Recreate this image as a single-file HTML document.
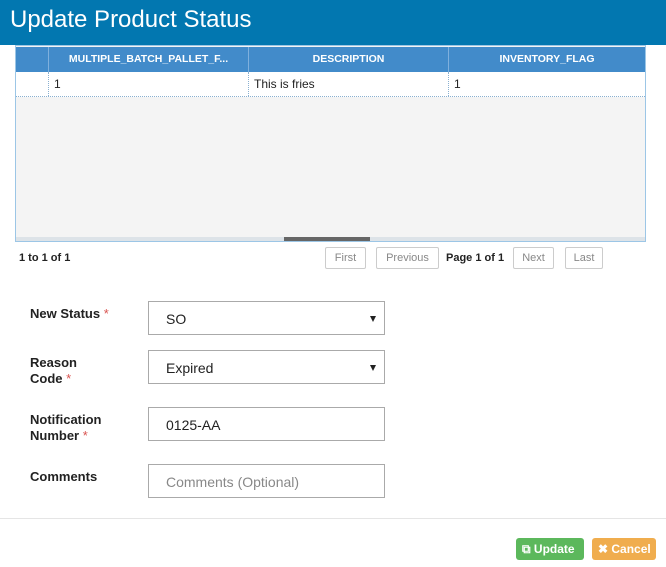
<!DOCTYPE html>
<html><head><style>
*{box-sizing:border-box;margin:0;padding:0}
body{width:666px;height:567px;background:#fff;font-family:"Liberation Sans",sans-serif;position:relative;overflow:hidden;color:#222}
.hd{position:absolute;left:0;top:0;width:666px;height:45px;background:#0277b0;color:#fff;font-size:24px;padding:6px 0 0 10px}
.grid{position:absolute;left:15px;top:45px;width:631px;height:197px;border:1px solid #9cc6e6;background:#f4f4f4}
.hr{position:absolute;left:0;top:1px;width:629px;height:25px;background:#428bca}
.c{position:absolute;height:25px;font-size:10.5px;font-weight:bold;color:#fff;text-align:center;line-height:25px;border-left:1px solid #7fb0dd}
.row{position:absolute;left:0;top:26px;width:629px;height:25px;background:#fff;border-bottom:1px dotted #8ab0d0}
.d{position:absolute;top:0;height:24px;font-size:12px;line-height:24px;padding-left:5px;border-left:1px dotted #8ab0d0}
.sb{position:absolute;left:0;bottom:0;width:629px;height:4px;background:#dde3e8}
.sb i{position:absolute;left:268px;top:0;width:86px;height:4px;background:#666}
.pg{position:absolute;top:247px;height:22px;border:1px solid #ccc;border-radius:2px;font-size:11px;color:#888;text-align:center;line-height:20px;background:#fff}
.t{position:absolute;font-size:11px;font-weight:bold}
.lb{position:absolute;left:30px;font-size:13px;font-weight:bold;line-height:16px}
.lb b{color:#d9534f;font-weight:normal}
.in{position:absolute;left:148px;width:237px;height:34px;border:1px solid #aaa;font-size:14px;padding:9px 0 0 17px}
.in.s::after{content:"";position:absolute;right:8px;top:14px;border-left:3.5px solid transparent;border-right:3.5px solid transparent;border-top:6px solid #222}
.btn{position:absolute;top:538px;height:22px;border-radius:3px;color:#fff;font-size:12px;font-weight:bold;line-height:22px;padding-left:6px}
</style></head><body>
<div class="hd">Update Product Status</div>
<div class="grid">
<div class="hr">
<div class="c" style="left:32px;width:200px">MULTIPLE_BATCH_PALLET_F...</div>
<div class="c" style="left:232px;width:200px">DESCRIPTION</div>
<div class="c" style="left:432px;width:197px">INVENTORY_FLAG</div>
</div>
<div class="row">
<div class="d" style="left:32px;width:200px">1</div>
<div class="d" style="left:232px;width:200px">This is fries</div>
<div class="d" style="left:432px;width:197px">1</div>
</div>
<div class="sb"><i></i></div>
</div>
<div class="t" style="left:19px;top:252px">1 to 1 of 1</div>
<div class="pg" style="left:325px;width:41px">First</div>
<div class="pg" style="left:376px;width:63px">Previous</div>
<div class="t" style="left:446px;top:252px">Page 1 of 1</div>
<div class="pg" style="left:513px;width:41px">Next</div>
<div class="pg" style="left:565px;width:38px">Last</div>
<div class="lb" style="top:306px">New Status <b>*</b></div>
<div class="in s" style="top:301px">SO</div>
<div class="lb" style="top:355px">Reason<br>Code <b>*</b></div>
<div class="in s" style="top:350px">Expired</div>
<div class="lb" style="top:412px">Notification<br>Number <b>*</b></div>
<div class="in" style="top:407px">0125-AA</div>
<div class="lb" style="top:469px">Comments</div>
<div class="in" style="top:464px;color:#888">Comments (Optional)</div>
<div style="position:absolute;left:0;top:518px;width:666px;height:1px;background:#e5e5e5"></div>
<div class="btn" style="left:516px;width:68px;background:#5cb85c">⧉ Update</div>
<div class="btn" style="left:592px;width:64px;background:#f0ad4e">✖ Cancel</div>
</body></html>
